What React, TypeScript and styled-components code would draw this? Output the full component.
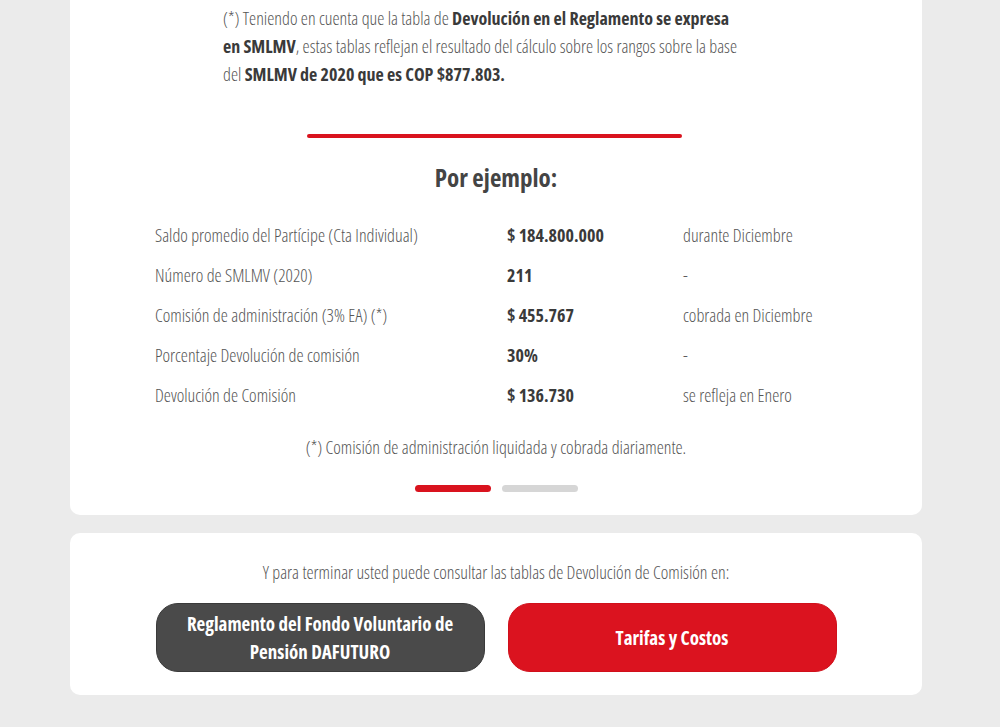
import React from "react";
import styled, { createGlobalStyle } from "styled-components";

const Global = createGlobalStyle`
  html, body { margin: 0; padding: 0; background: #ebebeb; }
  body { font-family: "Open Sans", "Liberation Sans", sans-serif; font-stretch: 77%; color: #555; }
`;

const Page = styled.div`
  width: 852px;
  margin: 0 auto;
  display: flex;
  flex-direction: column;
  gap: 18px;
  transform: translateX(-4px);
`;

const Card = styled.section<{ $top?: boolean }>`
  background: #fff;
  border-radius: ${(p) => (p.$top ? "0 0 10px 10px" : "10px")};
  padding: ${(p) => (p.$top ? "4px 0 23px" : "26px 0 23px")};
  display: flex;
  flex-direction: column;
  align-items: center;
`;

const Note = styled.p`
  margin: 0 0 0 153px;
  align-self: flex-start;
  width: 522px;
  font-size: 18px;
  line-height: 28px;
  font-weight: 300;
  color: #555;
  b { font-weight: 700; color: #3a3a3a; }
`;

const RedRule = styled.div`
  width: 375px;
  height: 4px;
  border-radius: 2px;
  background: #d9131e;
  margin: 46px 0 0 -4px;
`;

const Title = styled.h2`
  margin: 19px 0 18px;
  font-size: 25px;
  font-weight: 700;
  color: #444;
  line-height: 40px;
`;

const Table = styled.div`
  align-self: flex-start;
  margin-left: 85px;
  display: grid;
  grid-template-columns: 352px 176px 170px;
  grid-auto-rows: 40px;
  font-size: 18px;
  line-height: 40px;
`;

const Cell = styled.div<{ $bold?: boolean }>`
  font-weight: ${(p) => (p.$bold ? 700 : 300)};
  color: ${(p) => (p.$bold ? "#3a3a3a" : "#555")};
  white-space: nowrap;
`;

const Foot = styled.p`
  margin: 19px 0 0;
  font-size: 18px;
  line-height: 26px;
  font-weight: 300;
  color: #555;
`;

const Dots = styled.div`
  display: flex;
  gap: 11px;
  margin-top: 25px;
`;

const Dot = styled.span<{ $active?: boolean }>`
  width: 76px;
  height: 7px;
  border-radius: 4px;
  background: ${(p) => (p.$active ? "#d9131e" : "#d6d6d6")};
`;

const Lead = styled.p`
  margin: 0;
  font-size: 18px;
  line-height: 26px;
  font-weight: 300;
  color: #555;
`;

const Buttons = styled.div`
  display: flex;
  gap: 23px;
  margin-top: 18px;
`;

const Btn = styled.a<{ $variant: "dark" | "red" }>`
  width: 329px;
  height: 69px;
  border-radius: 22px;
  box-sizing: border-box;
  display: flex;
  align-items: center;
  justify-content: center;
  text-align: center;
  padding: 0 20px;
  color: #fff;
  font-size: 19px;
  font-weight: 700;
  line-height: 28px;
  text-decoration: none;
  background: ${(p) => (p.$variant === "dark" ? "#4a4a4a" : "#db131f")};
  border: 1px solid ${(p) => (p.$variant === "dark" ? "#3a3a3a" : "#d0101b")};
`;

const rows: [string, string, string][] = [
  ["Saldo promedio del Partícipe (Cta Individual)", "$ 184.800.000", "durante Diciembre"],
  ["Número de SMLMV (2020)", "211", "-"],
  ["Comisión de administración (3% EA) (*)", "$ 455.767", "cobrada en Diciembre"],
  ["Porcentaje Devolución de comisión", "30%", "-"],
  ["Devolución de Comisión", "$ 136.730", "se refleja en Enero"],
];

export default function App() {
  return (
    <>
      <Global />
      <Page>
        <Card $top>
          <Note>
            (*) Teniendo en cuenta que la tabla de <b>Devolución en el Reglamento se expresa en SMLMV</b>, estas tablas reflejan el resultado del cálculo sobre los rangos sobre la base del <b>SMLMV de 2020 que es COP $877.803.</b>
          </Note>
          <RedRule />
          <Title>Por ejemplo:</Title>
          <Table>
            {rows.map((r) => (
              <React.Fragment key={r[0]}>
                <Cell>{r[0]}</Cell>
                <Cell $bold>{r[1]}</Cell>
                <Cell>{r[2]}</Cell>
              </React.Fragment>
            ))}
          </Table>
          <Foot>(*) Comisión de administración liquidada y cobrada diariamente.</Foot>
          <Dots>
            <Dot $active />
            <Dot />
          </Dots>
        </Card>
        <Card>
          <Lead>Y para terminar usted puede consultar las tablas de Devolución de Comisión en:</Lead>
          <Buttons>
            <Btn $variant="dark" href="#">Reglamento del Fondo Voluntario de Pensión DAFUTURO</Btn>
            <Btn $variant="red" href="#">Tarifas y Costos</Btn>
          </Buttons>
        </Card>
      </Page>
    </>
  );
}
